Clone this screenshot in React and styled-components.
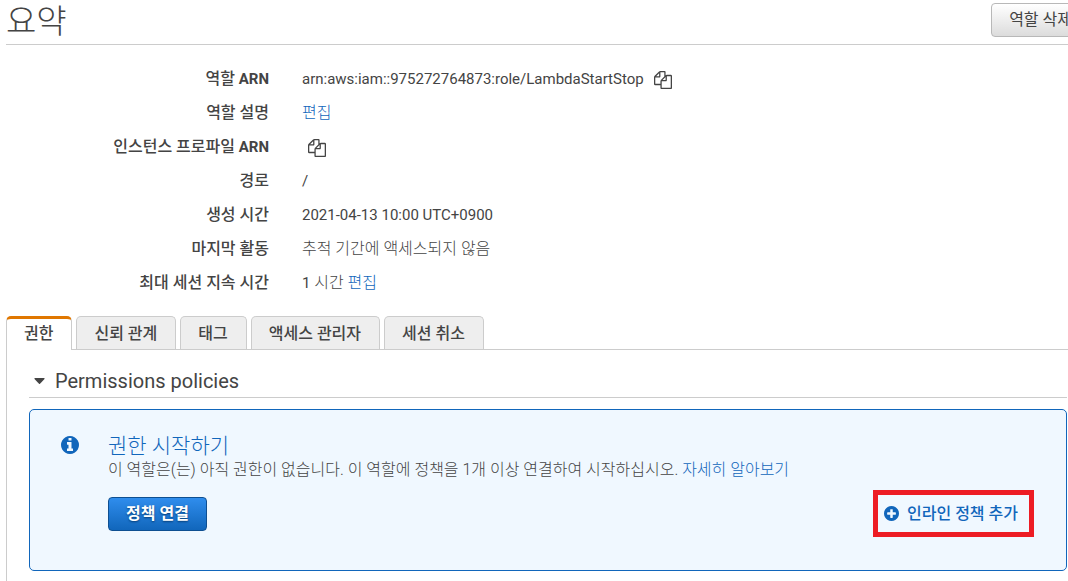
import React from "react";
import styled, { createGlobalStyle } from "styled-components";

const GlobalStyle = createGlobalStyle`
  *, *::before, *::after { box-sizing: border-box; }
  body {
    margin: 0;
    background: #fff;
    color: #444;
    font: 15px/20px Roboto, "Noto Sans CJK KR", sans-serif;
  }
  button { font: inherit; cursor: pointer; }
`;

const Viewport = styled.div`
  overflow: hidden;
`;

const Page = styled.main`
  margin: 0 -22px 0 6px;
`;

const Header = styled.header`
  display: flex;
  justify-content: space-between;
  align-items: flex-start;
  height: 45px;
  border-bottom: 1px solid #ccc;
`;

const Title = styled.h1`
  margin: 0;
  font-size: 33px;
  font-weight: 300;
  line-height: 44px;
`;

const Button = styled.button`
  height: 34px;
  padding: 0 17px;
  border: 1px solid ${(p) => (p.$primary ? "#0e4f91" : "#b8b8b8")};
  border-radius: 4px;
  background: ${(p) =>
    p.$primary
      ? "linear-gradient(#2f8ded, #1166bb)"
      : "linear-gradient(#fff, #dcdcdc)"};
  color: ${(p) => (p.$primary ? "#fff" : "#444")};
  text-shadow: ${(p) => (p.$primary ? "0 1px 2px #053c75" : "none")};
  font-size: 16px;
  font-weight: ${(p) => (p.$primary ? 700 : 400)};
  white-space: nowrap;
`;

const HeaderActions = styled.div`
  padding-top: 3px;
`;

const Details = styled.dl`
  margin: 17px 0 16px;
`;

const Detail = styled.div`
  display: grid;
  grid-template-columns: 263px 1fr;
  column-gap: 33px;
  align-items: center;
  min-height: 34px;
`;

const Label = styled.dt`
  text-align: right;
  font-weight: 700;
`;

const Value = styled.dd`
  display: flex;
  align-items: center;
  gap: 4px;
  margin: 0;
`;

const Korean = styled.span`
  font-size: 16px;
  font-weight: ${(p) => (p.$strong ? 500 : 300)};
`;

const Link = styled.a`
  color: #1166bb;
  font-size: 16px;
  font-weight: 300;
  text-decoration: none;
`;

const CopyButton = styled.button`
  display: flex;
  padding: 2px 6px 0;
  border: 0;
  background: none;
  color: #444;
`;

const Tabs = styled.div`
  display: flex;
  gap: 4px;
  height: 34px;
  border-bottom: 1px solid #ccc;
`;

const Tab = styled.button`
  height: ${(p) => (p.$active ? "34px" : "33px")};
  padding: ${(p) => (p.$active ? "0 18px 2px 17px" : "2px 18px 0 17px")};
  border: 1px solid #ccc;
  border-top: ${(p) => (p.$active ? "3px solid #e07700" : "1px solid #ccc")};
  border-bottom: 0;
  border-radius: 5px 5px 0 0;
  background: ${(p) => (p.$active ? "#fff" : "#eee")};
  color: #444;
  font-size: 16px;
  font-weight: 500;
  line-height: 28px;
`;

const Panel = styled.section`
  min-height: 260px;
  padding: 19px 22px 22px;
  border: solid #ccc;
  border-width: 0 1px;
`;

const SectionTitle = styled.h2`
  margin: 0 0 11px;
  border-bottom: 1px solid #ccc;
  font-size: 20px;
  font-weight: 400;
`;

const Toggle = styled.button`
  display: flex;
  align-items: center;
  gap: 10px;
  padding: 0 0 4px 5px;
  border: 0;
  background: none;
  color: inherit;
  line-height: 24px;
`;

const Notice = styled.div`
  display: flex;
  align-items: flex-start;
  gap: 29px;
  min-height: 162px;
  padding: 24px 32px 32px 31px;
  border: 1px solid #1166bb;
  border-radius: 5px;
  background: #f0f8ff;
`;

const NoticeIcon = styled.div`
  display: flex;
  padding-top: 2px;
  color: #1166bb;
`;

const NoticeBody = styled.div`
  flex: 1;
`;

const NoticeTitle = styled.h3`
  margin: 0;
  color: #1166bb;
  font-size: 21px;
  font-weight: 300;
  line-height: 25px;
`;

const NoticeText = styled.p`
  margin: 0;
  font-size: 16px;
  font-weight: 300;
  line-height: 22px;
`;

const Actions = styled.div`
  display: flex;
  align-items: center;
  justify-content: space-between;
  margin-top: 9px;
`;

const InlineAction = styled.button`
  display: flex;
  align-items: center;
  gap: 8px;
  height: 47px;
  padding: 0 11px 0 6px;
  border: 5px solid #ed1c24;
  background: none;
  color: #1166bb;
  font-size: 16px;
  font-weight: 500;
`;

const CopyIcon = () => (
  <svg width="18" height="18" viewBox="0 0 1792 1792" fill="currentColor" aria-hidden="true">
    <path d="M1696 384q40 0 68 28t28 68v1216q0 40-28 68t-68 28h-960q-40 0-68-28t-28-68v-288h-544q-40 0-68-28t-28-68v-672q0-40 20-88t48-76l408-408q28-28 76-48t88-20h416q40 0 68 28t28 68v328q68-40 128-40h416zm-544 213l-299 299h299v-299zm-640-384l-299 299h299v-299zm196 647l316-316v-416h-384v416q0 40-28 68t-68 28h-416v640h512v-256q0-40 20-88t48-76zm956 804v-1152h-384v416q0 40-28 68t-68 28h-416v640h896z" />
  </svg>
);

const InfoIcon = () => (
  <svg width="18" height="18" viewBox="128 128 1536 1536" fill="currentColor" aria-hidden="true">
    <path d="M1152 1376v-160q0-14-9-23t-23-9h-96v-512q0-14-9-23t-23-9h-320q-14 0-23 9t-9 23v160q0 14 9 23t23 9h96v320h-96q-14 0-23 9t-9 23v160q0 14 9 23t23 9h448q14 0 23-9t9-23zm-128-896v-160q0-14-9-23t-23-9h-192q-14 0-23 9t-9 23v160q0 14 9 23t23 9h192q14 0 23-9t9-23zm640 416q0 209-103 385.5t-279.5 279.5-385.5 103-385.5-103-279.5-279.5-103-385.5 103-385.5 279.5-279.5 385.5-103 385.5 103 279.5 279.5 103 385.5z" />
  </svg>
);

const PlusIcon = () => (
  <svg width="15" height="15" viewBox="128 128 1536 1536" fill="currentColor" aria-hidden="true">
    <path d="M1344 960v-128q0-26-19-45t-45-19h-256v-256q0-26-19-45t-45-19h-128q-26 0-45 19t-19 45v256h-256q-26 0-45 19t-19 45v128q0 26 19 45t45 19h256v256q0 26 19 45t45 19h128q26 0 45-19t19-45v-256h256q26 0 45-19t19-45zm320-64q0 209-103 385.5t-279.5 279.5-385.5 103-385.5-103-279.5-279.5-103-385.5 103-385.5 279.5-279.5 385.5-103 385.5 103 279.5 279.5 103 385.5z" />
  </svg>
);

const CaretIcon = () => (
  <svg width="11" height="6" viewBox="0 0 11 6" fill="currentColor" aria-hidden="true">
    <path d="M1 0h9q1 0 .5 1L6 5.700q-.5.500-1 0L.5 1Q0 0 1 0z" />
  </svg>
);

const Copy = () => (
  <CopyButton type="button" aria-label="ARN">
    <CopyIcon />
  </CopyButton>
);

const details = [
  [<><Korean $strong>역할</Korean> ARN</>, <>arn:aws:iam::975272764873:role/LambdaStartStop<Copy /></>],
  [<Korean $strong>역할 설명</Korean>, <Link href="#description">편집</Link>],
  [<><Korean $strong>인스턴스 프로파일</Korean> ARN</>, <Copy />],
  [<Korean $strong>경로</Korean>, "/"],
  [<Korean $strong>생성 시간</Korean>, "2021-04-13 10:00 UTC+0900"],
  [<Korean $strong>마지막 활동</Korean>, <Korean>추적 기간에 액세스되지 않음</Korean>],
  [
    <Korean $strong>최대 세션 지속 시간</Korean>,
    <><span>1 <Korean>시간</Korean></span><Link href="#duration">편집</Link></>,
  ],
];

const tabs = ["권한", "신뢰 관계", "태그", "액세스 관리자", "세션 취소"];

export default function App() {
  const [active, setActive] = React.useState(0);
  return (
    <Viewport>
      <GlobalStyle />
      <Page>
        <Header>
          <Title>요약</Title>
          <HeaderActions>
            <Button type="button">역할 삭제</Button>
          </HeaderActions>
        </Header>
        <Details>
          {details.map(([label, value], i) => (
            <Detail key={i}>
              <Label>{label}</Label>
              <Value>{value}</Value>
            </Detail>
          ))}
        </Details>
        <Tabs role="tablist">
          {tabs.map((name, i) => (
            <Tab
              key={name}
              type="button"
              role="tab"
              aria-selected={i === active}
              $active={i === active}
              onClick={() => setActive(i)}
            >
              {name}
            </Tab>
          ))}
        </Tabs>
        <Panel role="tabpanel">
          <SectionTitle>
            <Toggle type="button" aria-expanded="true">
              <CaretIcon />
              Permissions policies
            </Toggle>
          </SectionTitle>
          <Notice>
            <NoticeIcon>
              <InfoIcon />
            </NoticeIcon>
            <NoticeBody>
              <NoticeTitle>권한 시작하기</NoticeTitle>
              <NoticeText>
                이 역할은(는) 아직 권한이 없습니다. 이 역할에 정책을 1개 이상 연결하여 시작하십시오.{" "}
                <Link href="#learn-more">자세히 알아보기</Link>
              </NoticeText>
              <Actions>
                <Button type="button" $primary>정책 연결</Button>
                <InlineAction type="button">
                  <PlusIcon />
                  인라인 정책 추가
                </InlineAction>
              </Actions>
            </NoticeBody>
          </Notice>
        </Panel>
      </Page>
    </Viewport>
  );
}
